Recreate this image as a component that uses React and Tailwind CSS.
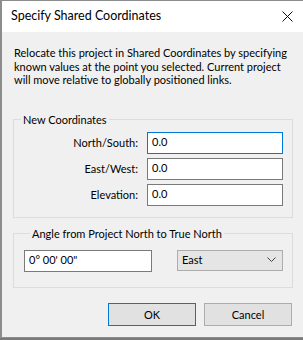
export default function App() {

    const rows = [
        "North/South:",
        "East/West:",
        "Elevation:",
    ];

    return (

        <div className="w-[303px] h-[340px] bg-[#7a7a7a] overflow-hidden text-black" style={{ fontFamily: 'Lato, "Liberation Sans", sans-serif' }}>

            <div className="flex flex-col w-[303px] border-l-2 border-t border-b border-[#8c8c8c] bg-[#f0f0f0]">

                {/* title bar */}
                <div className="h-[31px] bg-white flex items-center justify-between pl-[9px] pr-[10px]">

                    <span className="text-[12.5px] leading-none">
                        Specify Shared Coordinates
                    </span>

                    <svg width="11" height="11" viewBox="0 0 11 11">
                        <path d="M0.5 0.5 L10.5 10.5 M10.5 0.5 L0.5 10.5" stroke="#111" strokeWidth="1" />
                    </svg>

                </div>

                <div className="pl-[11px] pr-[10px] pt-[14px] pb-[11px] text-[11px]">

                    <p className="leading-[13.5px] whitespace-nowrap pl-[1px]">
                        Relocate this project in Shared Coordinates by specifying<br />
                        known values at the point you selected. Current project<br />
                        will move relative to globally positioned links.
                    </p>

                    <fieldset className="mt-[26px] border border-[#dcdcdc] pl-[1px] pr-[9px] pb-[11px]">

                        <legend className="ml-[6px] px-[2px] leading-[14px]">
                            New Coordinates
                        </legend>

                        <div className="pt-[5px] flex flex-col gap-[4px]">

                            {rows.map((label, i) => (

                                <div key={label} className="flex items-center gap-[9px]">

                                    <span className="w-[123px] text-right leading-none">
                                        {label}
                                    </span>

                                    <div className={`w-[136px] h-[22px] bg-white border flex items-center pl-[4px] ${i === 0 ? "border-[#0078d7]" : "border-[#7a7a7a]"}`}>
                                        0.0
                                    </div>

                                </div>

                            ))}

                        </div>

                    </fieldset>

                    <fieldset className="mt-[9px] border border-[#dcdcdc] pl-[10px] pr-[9px] pt-[9px] pb-[15px]">

                        <legend className="ml-[6px] px-[2px] leading-[14px]">
                            Angle from Project North to True North
                        </legend>

                        <div className="flex items-start gap-[25px]">

                            <div className="w-[128px] h-[22px] bg-white border border-[#7a7a7a] flex items-center pl-[4px]">
                                0° 00' 00"
                            </div>

                            <div className="w-[106px] h-[21px] bg-[#e5e5e5] border border-[#adadad] flex items-center justify-between pl-[4px] pr-[6px]">
                                <span>East</span>
                                <svg width="9" height="6" viewBox="0 0 9 6">
                                    <path d="M0.5 0.5 L4.5 4.5 L8.5 0.5" fill="none" stroke="#444" strokeWidth="1" />
                                </svg>
                            </div>

                        </div>

                    </fieldset>

                    <div className="mt-[15px] flex justify-end gap-[8px] pr-[1px]">

                        <button className="w-[88px] h-[23px] bg-[#e1e1e1] border border-[#0078d7] leading-none">
                            OK
                        </button>

                        <button className="w-[88px] h-[23px] bg-[#e1e1e1] border border-[#adadad] leading-none">
                            Cancel
                        </button>

                    </div>

                </div>

            </div>

        </div>

    );

}
